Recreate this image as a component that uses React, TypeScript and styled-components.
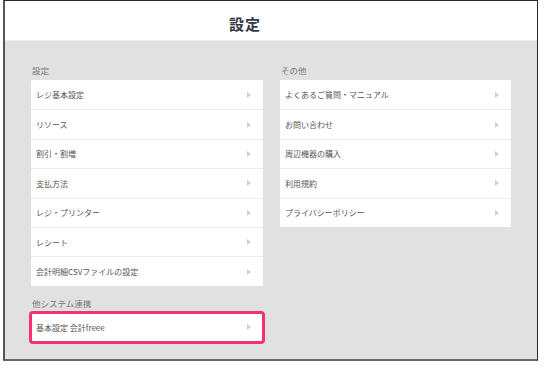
import React from "react";
import styled, { createGlobalStyle } from "styled-components";

const GlobalStyle = createGlobalStyle`
  body {
    margin: 0;
    background: #ffffff;
    font-family: "Noto Sans CJK JP", "Noto Sans", sans-serif;
  }
`;

const Frame = styled.div`
  box-sizing: border-box;
  margin-left: 3px;
  width: 535px;
  height: 361px;
  border: 1px solid #2a2a2a;
  border-left: 2px solid #555;
  border-bottom: 2px solid #666;
  background: #e1e1e1;
  display: flex;
  flex-direction: column;
`;

const Header = styled.header`
  box-sizing: border-box;
  height: 40px;
  padding: 6px 52px 0 0;
  background: #ffffff;
  border-bottom: 1px solid #ececec;
  display: flex;
  align-items: center;
  justify-content: center;
`;

const Title = styled.h1`
  margin: 0;
  font-size: 15px;
  font-weight: 700;
  color: #333844;
  letter-spacing: 1px;
`;

const Columns = styled.div`
  display: grid;
  grid-template-columns: 232px 231px;
  column-gap: 17px;
  align-items: start;
  padding: 23px 0 0 26px;
`;

const Section = styled.section<{ $spaced?: boolean }>`
  margin-top: ${(p) => (p.$spaced ? "11px" : "0")};
`;

const Label = styled.div`
  font-size: 8.5px;
  line-height: 12px;
  color: #777;
  padding-left: 1px;
  margin-bottom: 4px;
`;

const Card = styled.div`
  background: #ffffff;
  border-radius: 2px;
  overflow: hidden;
`;

const Row = styled.div<{ $highlight?: boolean }>`
  box-sizing: border-box;
  height: 29.4px;
  padding: 0 12px 0 5px;
  display: flex;
  align-items: center;
  justify-content: space-between;
  font-size: 8px;
  color: #555;
  background: #ffffff;
  border-radius: ${(p) => (p.$highlight ? "2px" : "0")};
  outline: ${(p) => (p.$highlight ? "3px solid #f2336f" : "none")};
  outline-offset: -1px;

  & + & {
    border-top: 1px solid #ececec;
  }
`;

const Arrow = styled.span`
  width: 0;
  height: 0;
  border-left: 4px solid #cfcfcf;
  border-top: 3px solid transparent;
  border-bottom: 3px solid transparent;
`;

const settings = [
  "レジ基本設定",
  "リソース",
  "割引・割増",
  "支払方法",
  "レジ・プリンター",
  "レシート",
  "会計明細CSVファイルの設定",
];

const others = [
  "よくあるご質問・マニュアル",
  "お問い合わせ",
  "周辺機器の購入",
  "利用規約",
  "プライバシーポリシー",
];

const App = () => {
  return (
    <>
      <GlobalStyle />
      <Frame>
        <Header>
          <Title>設定</Title>
        </Header>
        <Columns>
          <div>
            <Section>
              <Label>設定</Label>
              <Card>
                {settings.map((item) => (
                  <Row key={item}>
                    {item}
                    <Arrow />
                  </Row>
                ))}
              </Card>
            </Section>
            <Section $spaced>
              <Label>他システム連携</Label>
              <Row $highlight>
                基本設定 会計freee
                <Arrow />
              </Row>
            </Section>
          </div>
          <Section>
            <Label>その他</Label>
            <Card>
              {others.map((item) => (
                <Row key={item}>
                  {item}
                  <Arrow />
                </Row>
              ))}
            </Card>
          </Section>
        </Columns>
      </Frame>
    </>
  );
};

export default App;
